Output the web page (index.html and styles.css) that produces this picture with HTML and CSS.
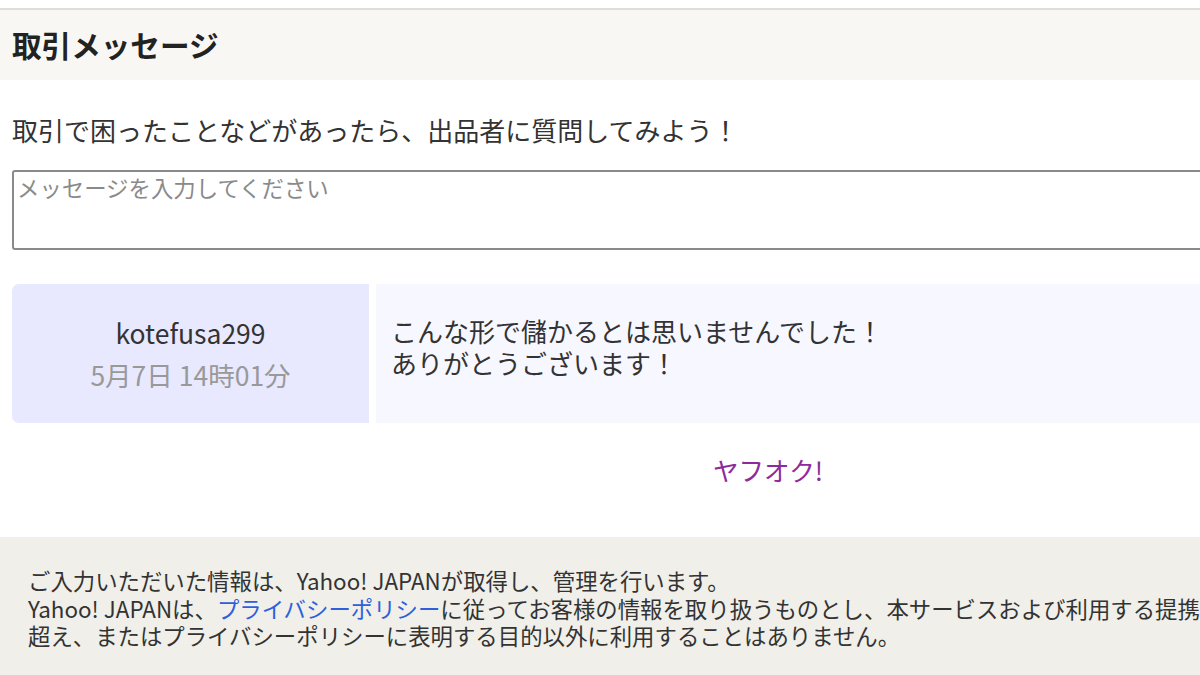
FILE: index.html
```html
<!DOCTYPE html>
<html lang="ja">
<head>
    <meta charset="UTF-8">
    <meta name="viewport" content="width=device-width, initial-scale=1.0">
    <title>取引メッセージ</title>
    <link rel="stylesheet" href="styles.css">
</head>
<body>
<div class="page">
    <div class="section-head">
        <h2 class="section-title">取引メッセージ</h2>
    </div>

    <div class="message-area">
        <p class="intro">取引で困ったことなどがあったら、出品者に質問してみよう！</p>
        <textarea class="message-input" placeholder="メッセージを入力してください"></textarea>

        <!-- メッセージ一覧 -->
        <div class="message-row">
            <div class="message-meta">
                <div class="message-user">kotefusa299</div>
                <div class="message-date">5月7日 14時01分</div>
            </div>
            <div class="message-body">
                こんな形で儲かるとは思いませんでした！<br>
                ありがとうございます！
            </div>
        </div>

        <div class="service-link"><a href="#">ヤフオク!</a></div>
    </div>

    <div class="notice">
        <p>ご入力いただいた情報は、Yahoo! JAPANが取得し、管理を行います。</p>
        <p>Yahoo! JAPANは、<a href="#" class="policy-link">プライバシーポリシー</a>に従ってお客様の情報を取り扱うものとし、本サービスおよび利用する提携先の範囲を</p>
        <p>超え、またはプライバシーポリシーに表明する目的以外に利用することはありません。</p>
    </div>
</div>
</body>
</html>
```

FILE: styles.css
```css
html, body {
    margin: 0;
    padding: 0;
    background-color: #fff;
    overflow: hidden;
}
body {
    font-family: "Noto Sans CJK JP", "Liberation Sans", sans-serif;
    color: #333;
}
.page {
    width: 1536px;
    padding-top: 8px;
}
.section-head {
    border-top: 2px solid #dcdcd8;
    background-color: #f8f7f3;
    height: 70px;
    padding: 0 12px;
    display: flex;
    align-items: center;
}
.section-title {
    margin: 0;
    font-size: 29.6px;
    font-weight: bold;
    line-height: 36px;
    color: #222;
}
.message-area {
    padding: 34px 12px 0;
}
.intro {
    margin: 0 0 24px;
    font-size: 26px;
    line-height: 32px;
}
.message-input {
    display: block;
    box-sizing: border-box;
    width: 100%;
    height: 80px;
    margin: 0;
    padding: 1px 3px;
    border: 2px solid #8a8a8a;
    border-radius: 3px;
    font-family: inherit;
    font-size: 22.4px;
    line-height: 28px;
    resize: none;
}
.message-input::placeholder {
    color: #8a8a8a;
}
.message-row {
    display: flex;
    gap: 7px;
    height: 139px;
    margin-top: 34px;
}
.message-meta {
    width: 357px;
    flex: none;
    background-color: #e8e8ff;
    border-radius: 7px 0 0 7px;
    display: flex;
    flex-direction: column;
    justify-content: center;
    align-items: center;
    font-size: 26.5px;
    line-height: 42px;
}
.message-date {
    color: #999;
}
.message-body {
    flex: 1;
    background-color: #f7f7ff;
    padding: 31px 15px 0;
    font-size: 26px;
    line-height: 32px;
}
.service-link {
    margin-top: 31px;
    text-align: center;
    font-size: 25.6px;
    line-height: 32px;
    height: 83px;
}
.service-link a {
    color: #8e2a9e;
    text-decoration: none;
}
.notice {
    background-color: #f0efe9;
    padding: 30px 28px 40px;
    font-size: 22.4px;
    line-height: 27.5px;
    white-space: nowrap;
}
.notice p {
    margin: 0;
}
.policy-link {
    color: #2e5fdc;
    text-decoration: none;
}
```
